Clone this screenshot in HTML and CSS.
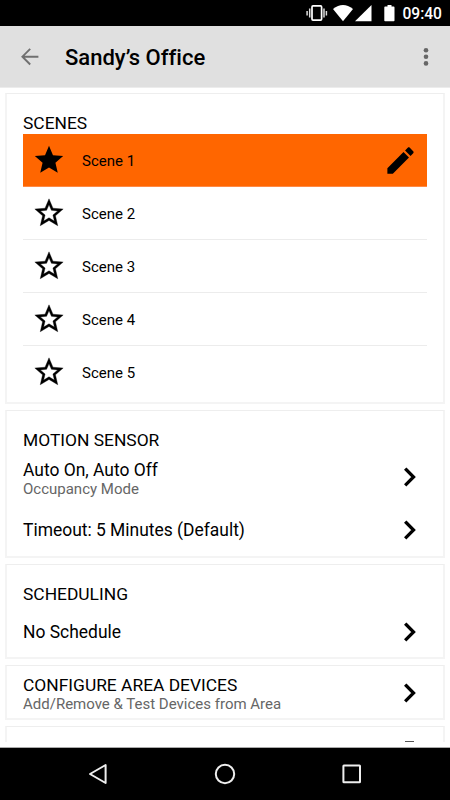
FILE: index.html
```html
<!DOCTYPE html>
<html lang="en">
<head>
    <meta charset="UTF-8">
    <meta name="viewport" content="width=device-width, initial-scale=1.0">
    <title>Sandy’s Office</title>
    <link rel="stylesheet" href="styles.css">
</head>
<body>
    <svg width="0" height="0" class="symbols">
        <symbol id="star" viewBox="0 0 24 24">
            <path d="M12 17.27L18.18 21l-1.64-7.03L22 9.24l-7.19-.61L12 2 9.19 8.63 2 9.24l5.46 4.73L5.82 21z"/>
        </symbol>
        <symbol id="star-outline" viewBox="0 0 24 24">
            <path d="M22 9.24l-7.19-.62L12 2 9.19 8.63 2 9.24l5.46 4.73L5.82 21 12 17.27 18.18 21l-1.63-7.03L22 9.24zM12 15.4l-3.76 2.27 1-4.28-3.32-2.88 4.38-.38L12 6.1l1.71 4.04 4.38.38-3.32 2.88 1 4.28L12 15.4z" stroke="#000" stroke-width=".25"/>
        </symbol>
        <symbol id="chevron" viewBox="0 0 24 24">
            <path d="M9.4 6.9L14.5 12l-5.1 5.1" fill="none" stroke="#000" stroke-width="2.3" stroke-linecap="square"/>
        </symbol>
    </svg>

    <div class="status-bar">
        <svg class="vibrate" width="22" height="18" viewBox="0 0 22 18">
            <rect x="6" y="1.9" width="9.6" height="14.2" rx="1" fill="none" stroke="#fff" stroke-width="1.7"/>
            <path d="M3.7 4.5v9M1.1 7v4.5M18 4.5v9M20.4 7v4.5" stroke="#ddd" stroke-width="1.5"/>
        </svg>
        <svg class="wifi" width="20" height="17" viewBox="0 0 20 17">
            <path d="M0 4Q10-4 20 4L10 16.3z" fill="#fff"/>
        </svg>
        <svg class="signal" width="17" height="17" viewBox="0 0 17 17">
            <path d="M16.5 0v16.3H0z" fill="#fff"/>
        </svg>
        <svg class="battery" width="11" height="17" viewBox="0 0 11 17">
            <path d="M3.5 0h4v1.6h2.2q.8 0 .8.8v13.1q0 .8-.8.8H1.1q-.8 0-.8-.8V2.4q0-.8.8-.8h2.4z" fill="#fff"/>
        </svg>
        <span class="time">09:40</span>
    </div>

    <header class="toolbar">
        <svg class="back" width="18" height="18" viewBox="0 0 18 18">
            <path d="M9.2.9L1.4 8.7l7.8 7.8M1.6 8.7H17.4" fill="none" stroke="#707070" stroke-width="1.9"/>
        </svg>
        <h1>Sandy’s Office</h1>
        <svg class="more" width="6" height="20" viewBox="0 0 6 20">
            <g fill="#666"><circle cx="3" cy="3.2" r="2.3"/><circle cx="3" cy="9.8" r="2.3"/><circle cx="3" cy="16.4" r="2.3"/></g>
        </svg>
    </header>

    <main class="content">
        <section class="card scenes">
            <h2>SCENES</h2>
            <ul class="scene-list">
                <li class="scene active">
                    <svg class="icon"><use href="#star"/></svg>
                    <span>Scene 1</span>
                    <svg class="edit" viewBox="0 0 24 24"><path d="M3 17.25V21h3.75L17.81 9.94l-3.75-3.75L3 17.25zM20.71 7.04c.39-.39.39-1.02 0-1.41l-2.34-2.34c-.39-.39-1.02-.39-1.41 0l-1.83 1.83 3.75 3.75 1.83-1.83z"/></svg>
                </li>
                <li class="scene"><svg class="icon"><use href="#star-outline"/></svg><span>Scene 2</span></li>
                <li class="scene"><svg class="icon"><use href="#star-outline"/></svg><span>Scene 3</span></li>
                <li class="scene"><svg class="icon"><use href="#star-outline"/></svg><span>Scene 4</span></li>
                <li class="scene"><svg class="icon"><use href="#star-outline"/></svg><span>Scene 5</span></li>
            </ul>
        </section>

        <section class="card motion">
            <h2>MOTION SENSOR</h2>
            <div class="row mode">
                <div class="label">
                    <p class="title">Auto On, Auto Off</p>
                    <p class="subtitle">Occupancy Mode</p>
                </div>
                <svg class="icon"><use href="#chevron"/></svg>
            </div>
            <div class="row timeout">
                <p class="title">Timeout: 5 Minutes (Default)</p>
                <svg class="icon"><use href="#chevron"/></svg>
            </div>
        </section>

        <section class="card scheduling">
            <h2>SCHEDULING</h2>
            <div class="row">
                <p class="title">No Schedule</p>
                <svg class="icon"><use href="#chevron"/></svg>
            </div>
        </section>

        <section class="card devices">
            <div class="row">
                <div class="label">
                    <h2>CONFIGURE AREA DEVICES</h2>
                    <p class="subtitle">Add/Remove &amp; Test Devices from Area</p>
                </div>
                <svg class="icon"><use href="#chevron"/></svg>
            </div>
        </section>

        <section class="card next">
            <span class="next-icon"></span>
        </section>
    </main>

    <nav class="nav-bar">
        <svg width="20" height="22" viewBox="0 0 20 22">
            <path d="M17.6 2v18L2 11z" fill="none" stroke="#eee" stroke-width="2" stroke-linejoin="round"/>
        </svg>
        <svg width="22" height="22" viewBox="0 0 22 22">
            <circle cx="11" cy="11" r="9.2" fill="none" stroke="#eee" stroke-width="2"/>
        </svg>
        <svg width="20" height="20" viewBox="0 0 20 20">
            <rect x="1.4" y="1.6" width="16.6" height="16.6" rx=".5" fill="none" stroke="#eee" stroke-width="2"/>
        </svg>
    </nav>
</body>
</html>
```

FILE: styles.css
```css
* {
    box-sizing: border-box;
    margin: 0;
    padding: 0;
}
body {
    font-family: Roboto, sans-serif;
    background-color: #fff;
    color: #000;
    width: 450px;
    height: 800px;
    overflow: hidden;
    display: flex;
    flex-direction: column;
}
svg {
    display: block;
    flex-shrink: 0;
}
.symbols {
    display: none;
}
.status-bar {
    height: 26px;
    background-color: #000;
    color: #fff;
    display: flex;
    align-items: center;
    justify-content: flex-end;
    padding-right: 8px;
}
.wifi {
    margin-left: 5px;
}
.signal {
    margin-left: 2px;
}
.battery {
    margin-left: 12px;
}
.time {
    font-size: 15.6px;
    font-weight: 500;
    line-height: 26px;
    padding-top: 2px;
    margin-left: 7px;
}
.toolbar {
    height: 62px;
    background-color: #e0e0e0;
    border-bottom: 1px solid #ececec;
    display: flex;
    align-items: center;
    padding: 0 21px;
}
h1 {
    flex: 1;
    font-size: 22px;
    font-weight: 500;
    font-variant-ligatures: none;
    line-height: 30px;
    margin-left: 26px;
    padding-top: 2px;
}
.content {
    height: 654px;
    padding: 5px 5px 0;
    overflow: hidden;
}
.card {
    border: 1px solid #eee;
    border-width: 1px 2px 2px;
    border-color: #eee #f4f4f4 #f4f4f4;
    padding: 0 16px;
    margin-bottom: 6px;
}
h2 {
    font-size: 17.4px;
    font-weight: 400;
    line-height: 22px;
}
.title {
    font-size: 17.45px;
    line-height: 22px;
}
.subtitle {
    font-size: 15px;
    line-height: 18px;
    color: #666;
}
.label {
    padding-top: 2px;
}
.label .subtitle {
    margin-top: -1px;
}
.icon {
    width: 34px;
    height: 34px;
}
.scenes {
    height: 311px;
    padding-top: 18px;
}
.scene-list {
    list-style: none;
}
.scene {
    height: 53px;
    display: flex;
    align-items: center;
    padding: 0 9px;
    border-bottom: 1px solid #ececec;
    font-size: 15px;
}
.scene span {
    flex: 1;
    margin-left: 16px;
    padding-top: 1px;
}
.scene.active {
    background-color: #ff6600;
    border-bottom-color: #ff8a45;
}
.scene:last-child {
    height: 52px;
    border-bottom: none;
}
.edit {
    width: 35px;
    height: 35px;
}
.row {
    display: flex;
    align-items: center;
    justify-content: space-between;
}
.motion {
    height: 148px;
    padding-top: 18px;
}
.mode {
    height: 52px;
}
.timeout {
    height: 54px;
}
.scheduling {
    height: 95px;
    padding-top: 18px;
}
.scheduling .row {
    height: 54px;
}
.devices {
    height: 55px;
}
.devices .row {
    height: 53px;
}
.next {
    height: 55px;
    display: flex;
    justify-content: flex-end;
    padding-top: 14px;
}
.next-icon {
    width: 9px;
    height: 20px;
    margin-right: 13px;
    background-color: #555;
}
.nav-bar {
    margin-top: 5px;
    height: 53px;
    background-color: #000;
    border-top: 1px solid #aaa;
    display: flex;
    align-items: center;
    justify-content: space-between;
    padding: 0 88px;
}
```
